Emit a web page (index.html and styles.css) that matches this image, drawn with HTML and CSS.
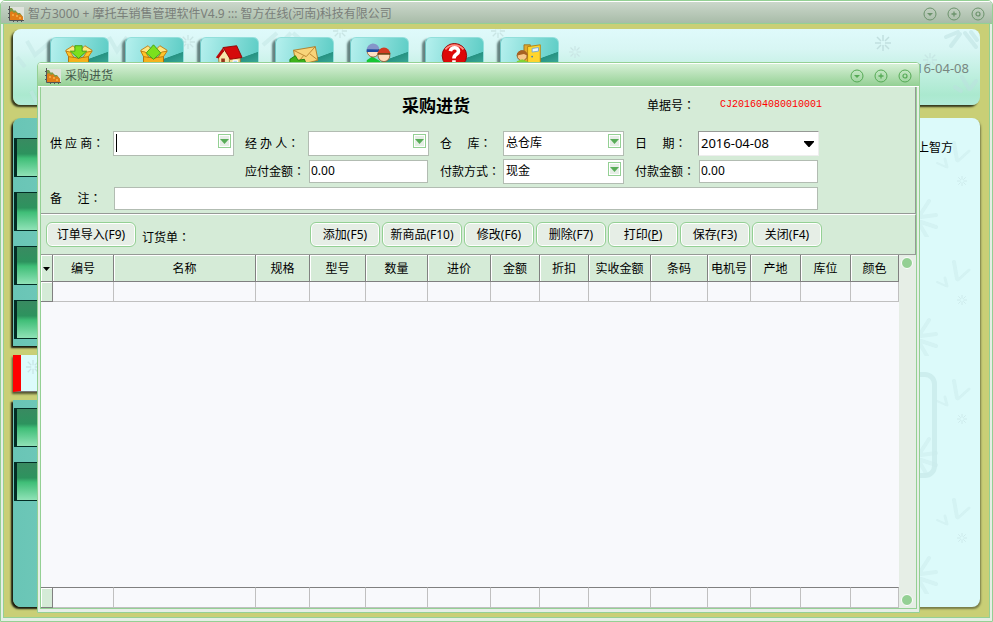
FILE: index.html
```html
<!DOCTYPE html>
<html lang="zh-CN">
<head>
<meta charset="utf-8">
<title>采购进货</title>
<link rel="stylesheet" href="styles.css">
</head>
<body>
<svg class="defs" aria-hidden="true">
  <defs>
    <symbol id="chart" viewBox="0 0 16 16">
      <rect x="1" y="1" width="15" height="13" fill="#dfe3dc"/>
      <path d="M2 13V2l2 0 2 3 1-1 3 3 2 0 3 4v2z" fill="#7d9a45"/>
      <path d="M2 14V6l2-1 2 2 2-1 2 3 2-1 3 3v3z" fill="#e07c17"/>
      <path d="M4 8h2v2H4zM8 9h2v2H8zM11 11h2v2h-2z" fill="#f2a63c"/>
      <path d="M1.500 0v14.500H16" fill="none" stroke="#555"/>
      <path d="M0 3.500h1M0 7.500h1M0 11.500h1M5.500 15v1M9.500 15v1M13.500 15v1" fill="none" stroke="#555"/>
    </symbol>
    <symbol id="c-min" viewBox="0 0 14 14"><circle cx="7" cy="7" r="6" fill="none" stroke="currentColor"/><path d="M4 6h6L7 9z" fill="currentColor"/></symbol>
    <symbol id="c-max" viewBox="0 0 14 14"><circle cx="7" cy="7" r="6" fill="none" stroke="currentColor"/><path d="M7 4.500v5M4.500 7h5" stroke="currentColor" fill="none" stroke-width="1.300"/></symbol>
    <symbol id="c-close" viewBox="0 0 14 14"><circle cx="7" cy="7" r="6" fill="none" stroke="currentColor"/><circle cx="7" cy="7" r="2" fill="none" stroke="currentColor" stroke-width="1.200"/></symbol>
    <symbol id="flake" viewBox="0 0 16 16"><path d="M8 0v6M8 10v6M0 8h6M10 8h6M2 2l4 4M10 10l4 4M14 2l-4 4M6 10l-4 4" fill="none" stroke="currentColor" stroke-width="1.500"/></symbol>
    <symbol id="box" viewBox="0 0 32 32">
      <path d="M5 14l11 3 11-3v16H5z" fill="#f5b21c" stroke="#a76a08"/>
      <path d="M5 14L2 8l8-5 4 4M27 14l4-6-8-5-4 4" fill="#ffe680" stroke="#c07a10"/>
      <path d="M2 9l3 6 6 1-4-6zM31 9l-4 6-6 1 4-6z" fill="#ffc629" stroke="#c07a10"/>
    </symbol>
    <symbol id="drop" viewBox="0 0 13 14">
      <rect x=".5" y=".5" width="12" height="13" fill="#e6eee6" stroke="#94d094"/>
      <rect x="1.500" y="1.500" width="10" height="11" fill="none" stroke="#fff"/>
      <path d="M2 5h9L6.500 10z" fill="#58ac58"/>
    </symbol>
  </defs>
</svg>

<div class="desktop">
  <header class="titlebar titlebar-main">
    <svg class="app-icon"><use href="#chart"/></svg>
    <span class="caption">智方3000 + 摩托车销售管理软件V4.9 ::: 智方在线(河南)科技有限公司</span>
    <button class="ctl" aria-label="最小化"><svg><use href="#c-min"/></svg></button>
    <button class="ctl" aria-label="最大化"><svg><use href="#c-max"/></svg></button>
    <button class="ctl" aria-label="关闭"><svg><use href="#c-close"/></svg></button>
  </header>

  <div class="workspace">
    <div class="topbar">
      <svg class="decor decor-left" aria-hidden="true">
        <g fill="none" stroke="#c2e6e4" stroke-width="4" opacity=".5">
          <path d="M14 12l8 14 14-12M96 8l8 14 10-14M4 28l8 10M250 16l14-12M262 20l16-16M280 4l14 12M18 62l6 12"/>
        </g>
        <g color="#c9e5e4">
          <use href="#flake" x="168" y="6" width="14" height="14"/>
          <use href="#flake" x="320" y="-5" width="14" height="14"/>
          <use href="#flake" x="478" y="-5" width="14" height="14"/>
          <use href="#flake" x="556" y="17" width="12" height="12"/>
        </g>
      </svg>
      <svg class="decor decor-right" aria-hidden="true">
        <g fill="none" stroke="#bcdfdf" stroke-width="4" opacity=".5" stroke-linecap="round">
          <path d="M94 8l12-5M99 17l9-12M113 4l11 14M119 3l6 8M110 48l7 12M118 60l6-8M103 58l6 4"/>
        </g>
        <g color="#c1dfdf"><use href="#flake" x="23" y="6" width="16" height="16"/><use href="#flake" x="71" y="24" width="14" height="14" opacity=".6"/></g>
      </svg>
      <nav class="tools">
        <button class="tool" aria-label="进货"><svg viewBox="0 0 32 32"><use href="#box"/><path d="M12 3h8v6h5l-9 8-9-8h5z" fill="#7ce01d" stroke="#3f9a12"/></svg></button>
        <button class="tool" aria-label="销售"><svg viewBox="0 0 32 32"><use href="#box"/><path d="M16 2l8 9-8 7-8-7z" fill="#7ce01d" stroke="#3f9a12"/></svg></button>
        <button class="tool" aria-label="库存"><svg viewBox="0 0 32 32"><path d="M5 15l7-8 6 9v14H6z" fill="#f7e7ac" stroke="#9c7431"/><path d="M17 15h12v15H17z" fill="#f1d991" stroke="#9c7431"/><path d="M10 5L25 3l6 13-13 2z" fill="#d50b0b" stroke="#8b0606"/><path d="M10 5L2 16l3 1 6-8" fill="#b80808"/><path d="M8 17h4v13H8z" fill="#96341a"/><path d="M21 19h5v5h-5z" fill="#b6d7fa" stroke="#fff"/></svg></button>
        <button class="tool" aria-label="短信"><svg viewBox="0 0 32 32"><path d="M5 8l24-4 3 15-24 6z" fill="#f9d479" stroke="#b07a23"/><path d="M5 8l14 7L29 4M8 24l8-10M32 19l-9-7" fill="none" stroke="#b8812c"/><path d="M1 18l6-4 3 5 7-1 3 8H1z" fill="#3fb31b" stroke="#198010"/></svg></button>
        <button class="tool" aria-label="客户"><svg viewBox="0 0 32 32"><path d="M3 30V19l6-4 9 5v10z" fill="#16c735"/><circle cx="10" cy="9" r="6.500" fill="#ffe0c4" stroke="#99633c"/><path d="M3 8a7 7 0 0 1 14-1z" fill="#8595c9"/><path d="M3 7h14v3H3z" fill="#1d4ba0"/><circle cx="22" cy="14" r="6.500" fill="#ffd9b8" stroke="#99633c"/><path d="M15 12a7 7 0 0 1 14 0z" fill="#d33b22"/><path d="M15 11h14v2H15z" fill="#6e4518"/></svg></button>
        <button class="tool" aria-label="帮助"><svg viewBox="0 0 32 32"><circle cx="17" cy="14" r="13.500" fill="#dd0808" stroke="#8f0606"/><path d="M7 7a13 13 0 0 1 20 0" fill="none" stroke="#ff8d80" stroke-width="2"/><path d="M12.500 9c1-5 9-5 9 0 0 4-5 3-5 8" fill="none" stroke="#fff" stroke-width="4"/><path d="M14.500 19h4v3h-4z" fill="#fff"/></svg></button>
        <button class="tool" aria-label="退出"><svg viewBox="0 0 32 32"><path d="M11 2h7v28h-7z" fill="#e2a92b" stroke="#9c7420"/><path d="M15 4l14-2v28l-14-2z" fill="#ffd52d" stroke="#b5820f"/><path d="M20 6l7-1v4l-7 1z" fill="#eaf6ff" stroke="#75a9cc"/><circle cx="20" cy="15" r="1" fill="#357cc0"/><circle cx="9" cy="14" r="5.500" fill="#f8c98a" stroke="#8d5724"/><path d="M3 14a6 6 0 0 1 12 0l-4-2-4 1z" fill="#a86222"/><path d="M3 28v-8l6-2 7 3v7z" fill="#83d232"/></svg></button>
      </nav>
      <span class="today">2016-04-08</span>
    </div>

    <div class="columns">
      <nav class="sidebar">
        <div class="group group-top"><button class="side" aria-label="菜单一"></button><button class="side" aria-label="菜单二"></button><button class="side" aria-label="菜单三"></button><button class="side" aria-label="菜单四"></button></div>
        <div class="current"><svg viewBox="0 0 16 16" aria-hidden="true"><use href="#flake"/></svg></div>
        <div class="group group-rest"><button class="side" aria-label="菜单五"></button><button class="side" aria-label="菜单六"></button></div>
      </nav>
      <main class="stage">
        <svg class="decor decor-stage" aria-hidden="true">
          <defs>
            <pattern id="leaves" width="64" height="119" patternUnits="userSpaceOnUse">
              <g fill="none" stroke="#cbebec" stroke-linecap="round" opacity=".5">
                <path d="M38 25l3 17" stroke-width="4"/><path d="M42 43l11-10" stroke-width="3"/>
                <path d="M29 41l2 8" stroke-width="3"/><path d="M21 45l9 4" stroke-width="2"/>
                <path d="M4 97l9-14M5 99l15-2M5 104l15 5M4 107l7 12" stroke-width="4"/>
              </g>
              <use href="#flake" x="41" y="58" width="10" height="10" color="#cdeaeb"/>
            </pattern>
          </defs>
          <rect width="64" height="100%" fill="url(#leaves)"/>
        </svg>
        <div class="notice">上智方</div>
        <div class="frame"></div>
      </main>
    </div>
  </div>

  <section class="dialog" aria-labelledby="dlg-title">
    <header class="titlebar titlebar-dialog">
      <svg class="app-icon"><use href="#chart"/></svg>
      <span class="caption" id="dlg-title">采购进货</span>
      <button class="ctl" aria-label="最小化"><svg><use href="#c-min"/></svg></button>
      <button class="ctl" aria-label="最大化"><svg><use href="#c-max"/></svg></button>
      <button class="ctl" aria-label="关闭"><svg><use href="#c-close"/></svg></button>
    </header>
    <div class="body">
      <form class="order">
        <div class="order-head">
          <h1>采购进货</h1>
          <div class="number"><span>单据号<i class="colon" lang="zh-TW">：</i></span><output>CJ201604080010001</output></div>
        </div>
        <div class="fields">
          <label for="supplier">供 应 商<i class="colon" lang="zh-TW">：</i></label>
          <div class="combo"><input id="supplier" type="text"><span class="caret"></span><svg><use href="#drop"/></svg></div>
          <label for="handler">经 办 人<i class="colon" lang="zh-TW">：</i></label>
          <div class="combo"><input id="handler" type="text"><svg><use href="#drop"/></svg></div>
          <label for="store">仓&nbsp;&nbsp;&nbsp;&nbsp;&nbsp;库<i class="colon" lang="zh-TW">：</i></label>
          <div class="combo"><select id="store"><option>总仓库</option></select><svg><use href="#drop"/></svg></div>
          <label for="date">日&nbsp;&nbsp;&nbsp;&nbsp;&nbsp;期<i class="colon" lang="zh-TW">：</i></label>
          <div class="combo datebox"><select id="date"><option>2016-04-08</option></select><svg viewBox="0 0 10 6"><path d="M0 0h10v1L5.500 6h-1L0 1z"/></svg></div>

          <label for="due" class="second">应付金额<i class="colon" lang="zh-TW">：</i></label>
          <input id="due" class="text" type="text" value="0.00">
          <label for="method">付款方式<i class="colon" lang="zh-TW">：</i></label>
          <div class="combo"><select id="method"><option>现金</option></select><svg><use href="#drop"/></svg></div>
          <label for="paid">付款金额<i class="colon" lang="zh-TW">：</i></label>
          <input id="paid" class="text" type="text" value="0.00">

          <label for="memo">备&nbsp;&nbsp;&nbsp;&nbsp;&nbsp;注<i class="colon" lang="zh-TW">：</i></label>
          <input id="memo" class="text wide" type="text">
        </div>
      </form>

      <div class="actions">
        <button class="btn import">订单导入(F9)</button>
        <span class="from">订货单<i class="colon" lang="zh-TW">：</i></span>
        <div class="btns">
          <button class="btn">添加(F5)</button>
          <button class="btn long">新商品(F10)</button>
          <button class="btn">修改(F6)</button>
          <button class="btn">删除(F7)</button>
          <button class="btn">打印(<u>P</u>)</button>
          <button class="btn">保存(F3)</button>
          <button class="btn">关闭(F4)</button>
        </div>
      </div>

      <div class="grid">
        <table>
          <colgroup>
            <col class="w12"><col class="w61"><col class="w142"><col class="w54"><col class="w56"><col class="w62"><col class="w63"><col class="w49"><col class="w49"><col class="w62"><col class="w57"><col class="w43"><col class="w50"><col class="w50"><col class="w48">
          </colgroup>
          <thead>
            <tr><th><svg class="mark" viewBox="0 0 7 4"><path d="M0 0h7L3.500 4z"/></svg></th><th>编号</th><th>名称</th><th>规格</th><th>型号</th><th>数量</th><th>进价</th><th>金额</th><th>折扣</th><th>实收金额</th><th>条码</th><th>电机号</th><th>产地</th><th>库位</th><th>颜色</th></tr>
          </thead>
          <tbody>
            <tr class="line"><td></td><td></td><td></td><td></td><td></td><td></td><td></td><td></td><td></td><td></td><td></td><td></td><td></td><td></td><td></td></tr>
            <tr class="blank"><td colspan="15"></td></tr>
          </tbody>
          <tfoot>
            <tr><td></td><td></td><td></td><td></td><td></td><td></td><td></td><td></td><td></td><td></td><td></td><td></td><td></td><td></td><td></td></tr>
          </tfoot>
        </table>
        <div class="scroll"><span></span><span></span></div>
      </div>
    </div>
  </section>
</div>
</body>
</html>
```
FILE: styles.css
```css
* { box-sizing: border-box; }

html, body { height: 100%; margin: 0; }

body {
  background: #fff;
  color: #000;
  font: 12px/16px "Noto Sans", "Noto Sans CJK SC", sans-serif;
}

button, input, select { font: inherit; color: inherit; margin: 0; padding: 0; }

.defs { position: absolute; width: 0; height: 0; }

/* Full-width colon centred in its em box */
.colon { font-family: "Noto Sans CJK TC", sans-serif; font-style: normal; line-height: 1; }

/* Main window */
.desktop {
  position: relative;
  display: flex;
  flex-direction: column;
  height: 100vh;
  overflow: hidden;
  background: #e6eee6;
  border: 1px solid #94d094;
  border-radius: 5px 5px 0 0;
}

.titlebar {
  display: flex;
  align-items: center;
  flex: none;
  height: 23px;
  border-top: 1px solid #fff;
}
.titlebar-main {
  padding: 2px 7px 0 7px;
  color: #7a7f7a;
  background: linear-gradient(#cbd7cb, #a8bca8);
  border-bottom: 1px solid #94d094;
}
.titlebar-dialog {
  height: 24px;
  padding: 2px 7px 0 7px;
  color: #45594a;
  background: linear-gradient(#d6f0d6, #94d094);
  border-bottom: 1px solid #fff;
}
.app-icon { width: 16px; height: 16px; margin-right: 4px; }
.caption { flex: 1; white-space: nowrap; overflow: hidden; }
.ctl {
  width: 14px;
  height: 14px;
  margin-left: 10px;
  background: none;
  border: 0;
  color: #6c936c;
}
.titlebar-dialog .ctl { color: #55a955; }
.ctl svg { display: block; width: 14px; height: 14px; }

.workspace {
  flex: 1;
  display: flex;
  flex-direction: column;
  gap: 13px;
  min-height: 0;
  margin: 0 2px 3px;
  padding: 5px 9px 10px 9px;
  background: #c9cf76;
  border: solid #94d094;
  border-width: 0 1px 1px;
}

.decor { position: absolute; top: 0; pointer-events: none; }
.decor-left { left: 0; width: 100%; height: 100%; }
.decor-right { right: 0; width: 128px; height: 100%; }
.decor-stage { right: 0; width: 64px; height: 100%; }

.topbar {
  position: relative;
  display: flex;
  justify-content: space-between;
  height: 76px;
  padding: 8px 11px 0 37px;
  overflow: hidden;
  flex: none;
  border-radius: 8px;
  background: linear-gradient(#dffafb 0, #d8f6f4 20px, #abe9cf 66px, #b2ebd8);
  box-shadow: -2px 2px 2px #34381c;
}
.tools { position: relative; display: flex; gap: 16px; }
.tool {
  display: flex;
  align-items: flex-start;
  width: 59px;
  height: 59px;
  padding: 5px 0 0 13px;
  border: 1px solid #92dfdb;
  border-left-color: #6dc3c2;
  border-radius: 6px;
  background: linear-gradient(160deg, transparent 44%, #269282 45%, #44b2a2 65%), linear-gradient(100deg, #b5f0ee, #54c9c1);
  box-shadow: -3px 2px 2px #66817f;
}
.tool svg { display: block; width: 29px; height: 29px; }
.today { position: relative; margin-top: 23px; color: #788680; font-size: 13px; }

.columns { flex: 1; display: flex; gap: 12px; min-height: 0; }

.sidebar { flex: none; width: 150px; display: flex; flex-direction: column; }
.group {
  display: flex;
  flex-direction: column;
  gap: 15px;
  padding-left: 1px;
  background: linear-gradient(90deg, #69c5b6, #80d0c0);
  box-shadow: -2px 2px 2px #17190d;
}
.group-top { padding-top: 20px; padding-bottom: 7px; border-radius: 8px 8px 0 0; }
.group-rest { flex: 1; padding-top: 8px; border-radius: 0 0 8px 8px; }
.side {
  height: 39px;
  border: solid #032d25;
  border-width: 1px 1px 1px 3px;
  background: linear-gradient(#398a61 0, #2d935e 40%, #3fbe77 52%, #90e2b7);
}
.current {
  height: 37px;
  margin: 9px 0 8px;
  padding: 5px;
  border-left: 8px solid #f00;
  border-bottom: 1px solid #777;
  background: #dcfbfb;
  box-shadow: -1px 2px 2px #555832;
}
.current svg { width: 14px; height: 14px; color: #c8e5e5; }

.stage {
  position: relative;
  flex: 1;
  display: flex;
  flex-direction: column;
  align-items: flex-end;
  padding: 22px 27px 0 0;
  border-radius: 8px;
  background: #dcfafa;
  box-shadow: 1px 2px 2px #787c48;
}
.notice { position: relative; }
.frame {
  width: 100px;
  height: 106px;
  margin: 216px 16px 0 0;
  border: 5px solid #cdeeee;
  border-radius: 12px;
}

/* Purchase dialog, floating over the main window */
.dialog {
  position: absolute;
  inset: 61px 72px 8px 36px;
  display: flex;
  flex-direction: column;
  background: #e6eee6;
  border: 1px solid #94d094;
  border-radius: 4px 4px 0 0;
  overflow: hidden;
}
.body {
  flex: 1;
  display: flex;
  flex-direction: column;
  min-height: 0;
  margin: 0 2px 3px;
  background: #d5ebd7;
  border: solid #94d094;
  border-width: 0 1px 1px;
}

.order {
  padding: 0 0 3px 9px;
  border-right: 1px solid #969a96;
  border-bottom: 1px solid #969a96;
}
.order-head {
  display: grid;
  grid-template-columns: 1fr auto 1fr;
  align-items: center;
  width: 772px;
  height: 37px;
  margin-bottom: 7px;
}
h1 { grid-column: 2; margin: 0; font-size: 17px; line-height: 24px; font-weight: 700; }
.number { display: flex; justify-content: flex-end; gap: 25px; }
.number output { color: #f00; font: 10px/14px "Liberation Mono", monospace; }

.fields {
  display: grid;
  grid-template-columns: repeat(4, 52px 121px);
  column-gap: 11px;
  row-gap: 3px;
  align-items: center;
  width: max-content;
}
.fields label { white-space: nowrap; }
.second { grid-column: 3; }
.combo { position: relative; height: 25px; }
.combo input, .combo select, .text {
  display: block;
  width: 100%;
  height: 100%;
  padding: 0 2px 2px;
  border: 1px solid #b2bcb2;
  border-radius: 0;
  background: #fff;
  appearance: none;
  outline: 0;
}
.combo svg { position: absolute; top: 3px; right: 3px; width: 13px; height: 14px; pointer-events: none; }
.caret { position: absolute; left: 3px; top: 3px; width: 1px; height: 18px; background: #000; }
.combo.datebox select {
  font-size: 13px;
  border-color: #969a96 #eee #eee #969a96;
}
.combo.datebox svg { top: 10px; right: 5px; width: 10px; height: 6px; }
.text { width: auto; height: 23px; margin: 0 1px; padding: 0 1px 2px; min-width: 0; }
.wide { grid-column: 2 / -1; }

.actions {
  display: flex;
  align-items: flex-start;
  height: 41px;
  padding: 7px 5px 0;
  border-top: 1px solid #fff;
  border-right: 1px solid #969a96;
  border-bottom: 1px solid #969a96;
}
.btn {
  width: 70px;
  height: 25px;
  border: 1px solid #94d094;
  border-radius: 6px;
  background: #e6eee6;
  box-shadow: inset 0 0 0 1px #fff;
  white-space: nowrap;
}
.import { width: 90px; }
.long { width: 80px; }
.from { width: 168px; margin: 8px 0 0 6px; }
.btns { display: flex; gap: 2px; }

.grid { flex: 1; display: flex; min-height: 0; background: #f8f9fc; }
table { flex: 1; height: 100%; table-layout: fixed; border-collapse: separate; border-spacing: 0; width: 0; }
th, td { padding: 0; }
th {
  height: 27px;
  padding-top: 2px;
  font-weight: 400;
  white-space: nowrap;
  background: #d5ebd7;
  border-right: 1px solid #808080;
  border-bottom: 1px solid #808080;
  box-shadow: inset 1px 1px 0 #fff;
}
.mark { display: block; width: 7px; height: 4px; margin: 0 auto; }
.line td { height: 20px; border-right: 1px solid #c0c0c0; border-bottom: 1px solid #c0c0c0; }
tfoot td { height: 21px; border-top: 1px solid #808080; border-right: 1px solid #c0c0c0; border-bottom: 1px solid #c0c0c0; }
.line td:first-child, tfoot td:first-child {
  background: #d5ebd7;
  border-right-color: #808080;
  border-bottom-color: #808080;
  box-shadow: inset 1px 1px 0 #fff;
}
.w12 { width: 12px; }
.w43 { width: 43px; }
.w48 { width: 48px; }
.w49 { width: 49px; }
.w50 { width: 50px; }
.w54 { width: 54px; }
.w56 { width: 56px; }
.w57 { width: 57px; }
.w61 { width: 61px; }
.w62 { width: 62px; }
.w63 { width: 63px; }
.w142 { width: 142px; }

.scroll {
  flex: none;
  width: 17px;
  display: flex;
  flex-direction: column;
  justify-content: space-between;
  padding: 2px;
  background: #e6eee6;
}
.scroll span { width: 12px; height: 12px; border: 1px solid #fff; border-radius: 50%; background: #94d094; }
```
